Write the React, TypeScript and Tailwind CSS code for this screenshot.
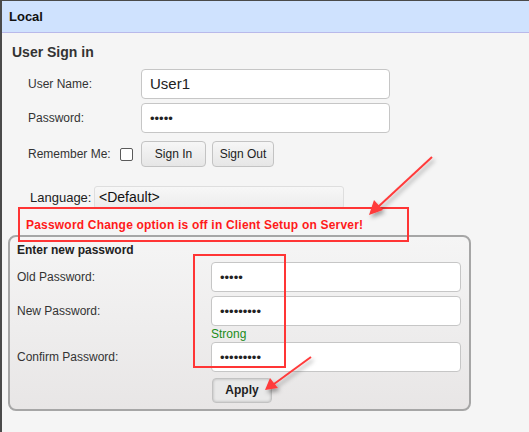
import React from "react";

const inputCls =
  "h-[30px] bg-white border border-[#c6c6c6] rounded-[4px] flex items-center px-[8px] text-[#222]";

function Dots({ n }: { n: number }) {
  return (
    <span className="text-[13px] leading-none text-[#222]">
      {"•".repeat(n)}
    </span>
  );
}

export default function App() {
  return (
    <div
      className="relative w-[529px] h-[432px] overflow-hidden bg-[#f5f5f5] border-t border-l-[2px] border-[#4a4a4a] text-[#333]"
      style={{ fontFamily: '"Liberation Sans", Arial, sans-serif' }}
    >
      {/* header */}
      <div className="h-[32px] bg-[#cfe2fe] border-b border-[#b9b9ea] flex items-center pl-[7px]">
        <span className="text-[13px] font-bold text-[#111]">Local</span>
      </div>

      {/* sign in section */}
      <div className="pl-[10px] pt-[11px]">
        <div className="text-[14px] font-bold leading-[17px] text-[#333]">User Sign in</div>

        <div className="flex items-center mt-[8px]">
          <span className="w-[129px] pl-[16px] text-[12px] text-[#333]">User Name:</span>
          <div className={inputCls + " w-[249px]"}>
            <span className="text-[15px]">User1</span>
          </div>
        </div>
        <div className="flex items-center mt-[4px]">
          <span className="w-[129px] pl-[16px] text-[12px] text-[#333]">Password:</span>
          <div className={inputCls + " w-[249px]"}>
            <Dots n={5} />
          </div>
        </div>

        <div className="flex items-center mt-[8px] h-[26px]">
          <span className="w-[108px] pl-[16px] text-[12px] text-[#333]">Remember Me:</span>
          <span className="w-[13px] h-[13px] bg-white border border-[#5a5a5a] rounded-[2px] mr-[8px]" />
          <button className="w-[65px] h-[26px] text-[12px] text-[#222] bg-gradient-to-b from-[#f6f6f6] to-[#e6e6e6] border border-[#c3c3c3] rounded-[4px]">
            Sign In
          </button>
          <button className="ml-[6px] w-[62px] h-[26px] text-[12px] text-[#222] bg-gradient-to-b from-[#f6f6f6] to-[#e6e6e6] border border-[#c3c3c3] rounded-[4px]">
            Sign Out
          </button>
        </div>

        <div className="flex items-center mt-[19px]">
          <span className="w-[82px] pl-[18px] text-[13px] text-[#222]">Language:</span>
          <div className="w-[250px] h-[23px] flex items-center pl-[4px] bg-gradient-to-b from-[#f7f7f7] to-[#ececec] border border-[#dedede] rounded-[3px]">
            <span className="text-[14px] text-[#111]">&lt;Default&gt;</span>
          </div>
        </div>
      </div>

      {/* new password fieldset */}
      <div className="ml-[6px] mt-[26px] w-[463px] h-[176px] border-[2px] border-[#a6a6a6] rounded-[8px] bg-gradient-to-b from-[#f5f5f5] to-[#e8e6e6] pl-[7px] pt-[6px]">
        <div className="text-[12px] font-bold leading-[14px] text-[#222]">Enter new password</div>

        <div className="flex items-center mt-[5px]">
          <span className="w-[194px] text-[12px] text-[#333]">Old Password:</span>
          <div className={inputCls + " w-[250px]"}>
            <Dots n={5} />
          </div>
        </div>
        <div className="flex items-center mt-[4px]">
          <span className="w-[194px] text-[12px] text-[#333]">New Password:</span>
          <div className={inputCls + " w-[250px]"}>
            <Dots n={9} />
          </div>
        </div>
        <div className="pl-[194px] h-[16px] flex items-center text-[12px] text-[#1a8c1a]">Strong</div>
        <div className="flex items-center">
          <span className="w-[194px] text-[12px] text-[#333]">Confirm Password:</span>
          <div className={inputCls + " w-[250px]"}>
            <Dots n={9} />
          </div>
        </div>
        <div className="pl-[195px] mt-[5px]">
          <button className="w-[60px] h-[25px] text-[12px] font-bold text-[#1e1e1e] bg-[#e9e9e9] border border-[#c2c2c2] rounded-[4px] shadow-[inset_0_0_3px_rgba(0,0,0,0.25)]">
            Apply
          </button>
        </div>
      </div>

      {/* annotation overlays */}
      <div className="absolute left-[16px] top-[206px] w-[391px] h-[35px] border-[2px] border-[#ff3535] flex items-center pl-[6px]">
        <span className="text-[12px] font-bold text-[#ff1a1a] tracking-[0.2px]">
          Password Change option is off in Client Setup on Server!
        </span>
      </div>
      <div className="absolute left-[191px] top-[253px] w-[93px] h-[114px] border-[2px] border-[#ff3535]" />

      <svg className="absolute left-0 top-0" width="529" height="432" viewBox="0 0 529 432">
        <defs>
          <filter id="sh" x="-20%" y="-20%" width="140%" height="140%">
            <feDropShadow dx="2" dy="3" stdDeviation="2" floodColor="#000" floodOpacity="0.35" />
          </filter>
        </defs>
        <g filter="url(#sh)" stroke="#ff3b3b" fill="#ff3b3b">
          <line x1="430" y1="156" x2="376" y2="206" strokeWidth="2" />
          <polygon points="367,214 372,199 381,209" stroke="none" />
          <line x1="309" y1="356" x2="272" y2="383" strokeWidth="2" />
          <polygon points="263,389 268,377 276,387" stroke="none" />
        </g>
      </svg>
    </div>
  );
}
